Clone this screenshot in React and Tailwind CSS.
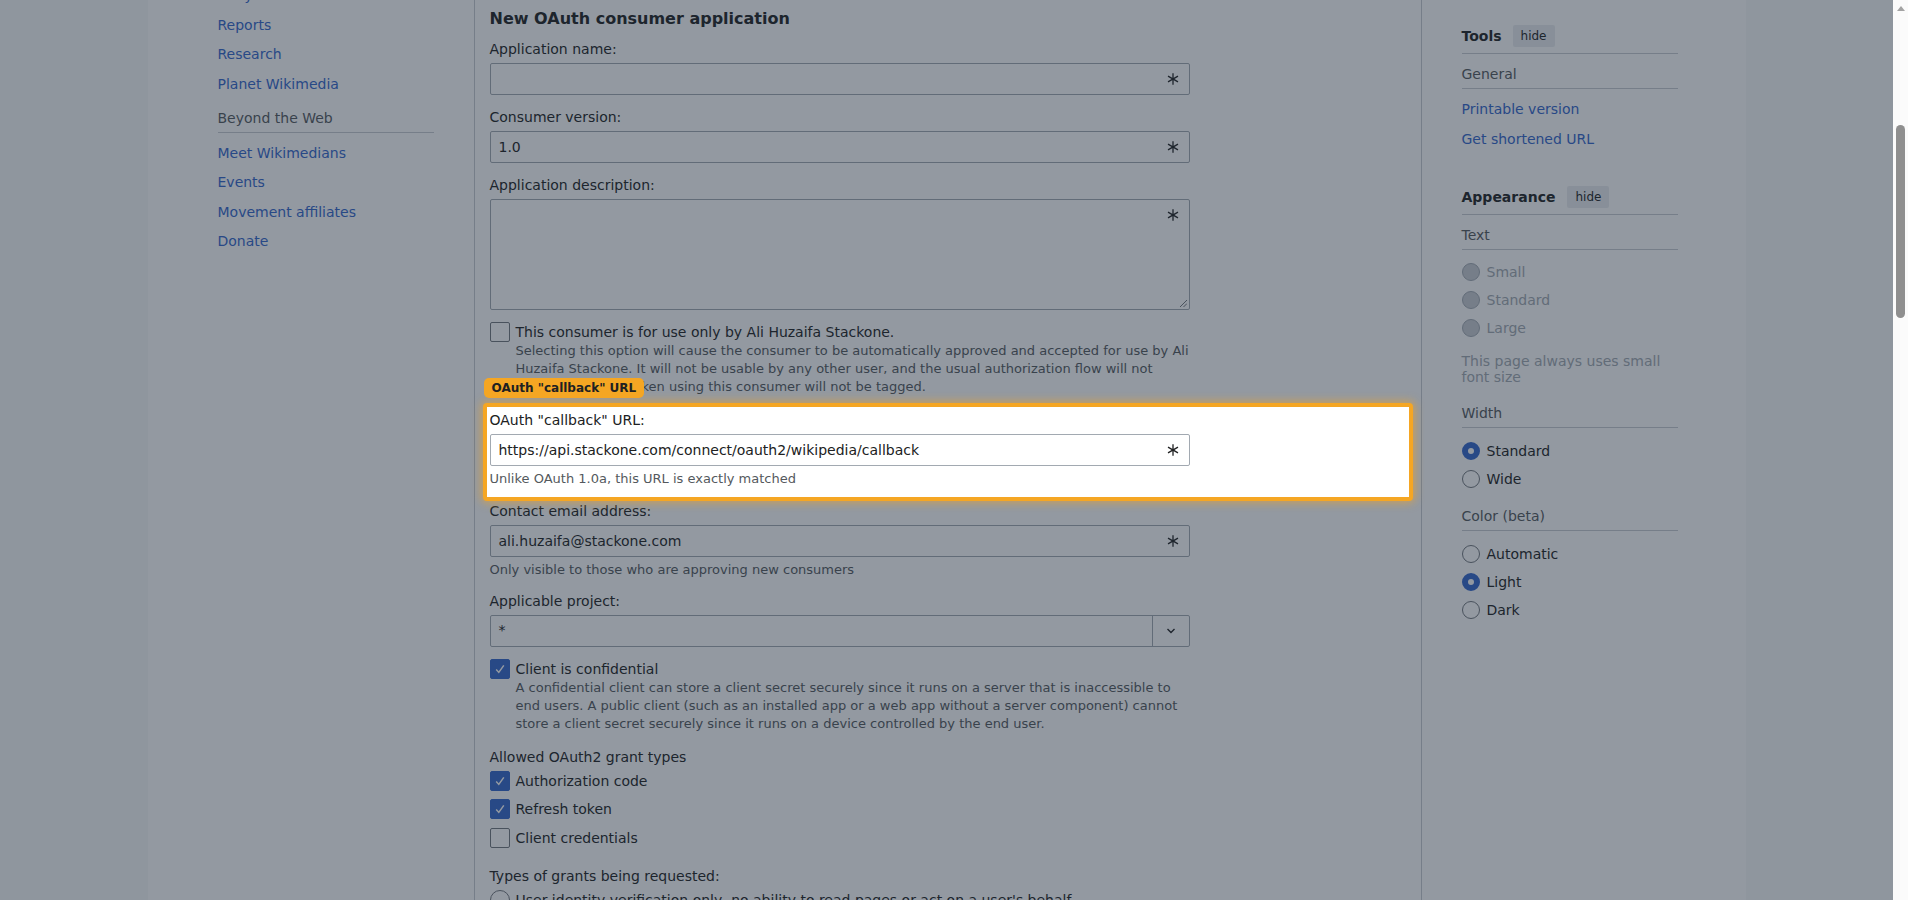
import React from "react";

const Asterisk = () => (
  <svg width="12" height="12" viewBox="0 0 12 12" className="shrink-0">
    <g stroke="#202122" strokeWidth="1.3">
      <line x1="6" y1="0.3" x2="6" y2="11.7" />
      <line x1="1" y1="3.1" x2="11" y2="8.9" />
      <line x1="1" y1="8.9" x2="11" y2="3.1" />
    </g>
    <circle cx="6" cy="6" r="1.3" fill="#202122" />
  </svg>
);

function TextInput({ value }) {
  return (
    <div className="mt-[4px] flex h-[32px] w-[700px] items-center justify-between rounded-[2px] border border-[#a2a9b1] bg-white pl-[8px] pr-[10px] text-[14px] text-[#202122]">
      <span>{value}</span>
      <Asterisk />
    </div>
  );
}

function Label({ children }) {
  return <div className="text-[14px] leading-[20px] text-[#202122]">{children}</div>;
}

function Help({ children, className = "" }) {
  return (
    <div className={`whitespace-nowrap text-[13px] leading-[18px] text-[#54595d] ${className}`}>{children}</div>
  );
}

function Box({ checked }) {
  return checked ? (
    <div className="flex h-[20px] w-[20px] shrink-0 items-center justify-center rounded-[2px] border border-[#36c] bg-[#36c]">
      <svg width="14" height="14" viewBox="0 0 14 14">
        <path d="M3.2 7.6 L5.8 10.4 L10.8 3.4" fill="none" stroke="#fff" strokeWidth="1.5" />
      </svg>
    </div>
  ) : (
    <div className="h-[20px] w-[20px] shrink-0 rounded-[2px] border border-[#72777d] bg-white" />
  );
}

function CheckRow({ checked, label, className = "" }) {
  return (
    <div className={`flex items-center gap-[6px] ${className}`}>
      <Box checked={checked} />
      <span className="text-[14px] leading-[20px] text-[#202122]">{label}</span>
    </div>
  );
}

function SideRadio({ state, label }) {
  const circle =
    state === "on"
      ? "border-[6px] border-[#36c] bg-white"
      : state === "disabled"
      ? "border border-[#a2a9b1] bg-[#c8ccd1]"
      : "border border-[#72777d] bg-white";
  const text = state === "disabled" ? "text-[#a2a9b1]" : "text-[#202122]";
  return (
    <div className="flex h-[28px] items-center gap-[7px]">
      <div className={`h-[18px] w-[18px] shrink-0 rounded-full ${circle}`} />
      <span className={`text-[14px] leading-[20px] ${text}`}>{label}</span>
    </div>
  );
}

function HideBtn() {
  return (
    <div className="flex h-[22px] items-center rounded-[2px] bg-[#eaecf0] px-[8px] text-[12px] text-[#202122]">hide</div>
  );
}

const SideLink = ({ children }) => (
  <div className="flex h-[29.5px] items-center text-[14px] leading-[20px] text-[#36c]">{children}</div>
);

export default function App() {
  return (
    <div className="flex h-[900px] w-[1908px] overflow-hidden">
      <div className="relative h-[900px] flex-1 overflow-hidden bg-[#f8f9fa] font-['DejaVu_Sans',sans-serif]">
        <div className="mx-auto flex h-full w-[1598px] bg-white">
          {/* Left sidebar */}
          <div className="w-[326px] shrink-0 pl-[70px]">
            <div className="mt-[-19.5px] w-[216px]">
              <SideLink>Babylon</SideLink>
              <SideLink>Reports</SideLink>
              <SideLink>Research</SideLink>
              <SideLink>Planet Wikimedia</SideLink>
              <div className="mt-[9.5px] border-b border-[#c8ccd1] pb-[4px] text-[14px] leading-[20px] text-[#54595d]">
                Beyond the Web
              </div>
              <div className="mt-[5px]">
                <SideLink>Meet Wikimedians</SideLink>
                <SideLink>Events</SideLink>
                <SideLink>Movement affiliates</SideLink>
                <SideLink>Donate</SideLink>
              </div>
            </div>
          </div>

          {/* Main content */}
          <div className="w-[948px] shrink-0 border-x border-[#c8ccd1] pl-[15px]">
            <div className="pt-[9px] text-[16px] font-bold leading-[20px] text-[#202122]">
              New OAuth consumer application
            </div>
            <div className="mt-[10px]">
              <Label>Application name:</Label>
              <TextInput value="" />
            </div>
            <div className="mt-[12px]">
              <Label>Consumer version:</Label>
              <TextInput value="1.0" />
            </div>
            <div className="mt-[12px]">
              <Label>Application description:</Label>
              <div className="mt-[4px] flex h-[111px] w-[700px] flex-col items-end justify-between rounded-[2px] border border-[#a2a9b1] bg-white pb-[2px] pr-[2px] pt-[9px]">
                <div className="mr-[8px]">
                  <Asterisk />
                </div>
                <svg width="8" height="8" viewBox="0 0 8 8">
                  <path d="M1 8 L8 1 M4.5 8 L8 4.5" stroke="#72777d" strokeWidth="1" />
                </svg>
              </div>
            </div>
            <div className="mt-[12px]">
              <CheckRow checked={false} label="This consumer is for use only by Ali Huzaifa Stackone." />
              <Help className="pl-[26px]">
                Selecting this option will cause the consumer to be automatically approved and accepted for use by Ali
                <br />
                Huzaifa Stackone. It will not be usable by any other user, and the usual authorization flow will not
                <br />
                function. Actions taken using this consumer will not be tagged.
              </Help>
            </div>

            {/* Highlighted field */}
            <div className="relative z-20 ml-[-7px] mt-[7px] w-[930px] rounded-[4px] border-4 border-[#f5a623] bg-white pb-[9px] pl-[3px] pt-[3px] shadow-[0_0_8px_2px_rgba(245,166,35,0.55)]">
              <div className="absolute left-[-3px] top-[-29px] flex h-[20px] items-center rounded-[5px] bg-[#f5a623] px-[8px] text-[12px] font-bold leading-[20px] text-[#202122]">
                OAuth "callback" URL
              </div>
              <Label>OAuth "callback" URL:</Label>
              <TextInput value="https://api.stackone.com/connect/oauth2/wikipedia/callback" />
              <Help className="mt-[4px]">Unlike OAuth 1.0a, this URL is exactly matched</Help>
            </div>

            <div>
              <Label>Contact email address:</Label>
              <TextInput value="ali.huzaifa@stackone.com" />
              <Help className="mt-[4px]">Only visible to those who are approving new consumers</Help>
            </div>
            <div className="mt-[12px]">
              <Label>Applicable project:</Label>
              <div className="mt-[4px] flex h-[32px] w-[700px] rounded-[2px] border border-[#a2a9b1] bg-white text-[14px] text-[#202122]">
                <div className="flex-1 pl-[8px] pt-[4px] leading-[20px]">*</div>
                <div className="flex w-[37px] items-center justify-center border-l border-[#a2a9b1]">
                  <svg width="10" height="6" viewBox="0 0 10 6">
                    <path d="M1.5 1 L5 4.5 L8.5 1" fill="none" stroke="#202122" strokeWidth="1.4" />
                  </svg>
                </div>
              </div>
            </div>
            <div className="mt-[12px]">
              <CheckRow checked label="Client is confidential" />
              <Help className="pl-[26px]">
                A confidential client can store a client secret securely since it runs on a server that is inaccessible to
                <br />
                end users. A public client (such as an installed app or a web app without a server component) cannot
                <br />
                store a client secret securely since it runs on a device controlled by the end user.
              </Help>
            </div>
            <div className="mt-[14px]">
              <Label>Allowed OAuth2 grant types</Label>
              <CheckRow className="mt-[4px]" checked label="Authorization code" />
              <CheckRow className="mt-[8px]" checked label="Refresh token" />
              <CheckRow className="mt-[9px]" checked={false} label="Client credentials" />
            </div>
            <div className="mt-[18px]">
              <Label>Types of grants being requested:</Label>
              <div className="mt-[4px] flex items-center gap-[6px]">
                <div className="h-[20px] w-[20px] shrink-0 rounded-full border border-[#72777d] bg-white" />
                <span className="text-[14px] leading-[20px] text-[#202122]">
                  User identity verification only, no ability to read pages or act on a user's behalf.
                </span>
              </div>
            </div>
          </div>

          {/* Right sidebar */}
          <div className="flex-1 pl-[40px] pt-[25px]">
            <div className="w-[216px]">
              <div className="flex items-center gap-[11px] border-b border-[#c8ccd1] pb-[6px]">
                <span className="text-[14px] font-bold leading-[22px] text-[#202122]">Tools</span>
                <HideBtn />
              </div>
              <div className="border-b border-[#c8ccd1] pb-[4px] pt-[10px] text-[14px] leading-[20px] text-[#54595d]">General</div>
              <div className="mt-[5px]">
                <div className="flex h-[30px] items-center text-[14px] text-[#36c]">Printable version</div>
                <div className="flex h-[30px] items-center text-[14px] text-[#36c]">Get shortened URL</div>
              </div>
              <div className="mt-[32px] flex items-center gap-[12px] border-b border-[#c8ccd1] pb-[6px]">
                <span className="text-[14px] font-bold leading-[22px] text-[#202122]">Appearance</span>
                <HideBtn />
              </div>
              <div className="border-b border-[#c8ccd1] pb-[4px] pt-[10px] text-[14px] leading-[20px] text-[#54595d]">Text</div>
              <div className="mt-[8px]">
                <SideRadio state="disabled" label="Small" />
                <SideRadio state="disabled" label="Standard" />
                <SideRadio state="disabled" label="Large" />
              </div>
              <div className="mt-[11px] text-[14px] leading-[16px] text-[#a2a9b1]">
                This page always uses small
                <br />
                font size
              </div>
              <div className="mt-[18px] border-b border-[#c8ccd1] pb-[4px] text-[14px] leading-[20px] text-[#54595d]">Width</div>
              <div className="mt-[9px]">
                <SideRadio state="on" label="Standard" />
                <SideRadio state="off" label="Wide" />
              </div>
              <div className="mt-[13px] border-b border-[#c8ccd1] pb-[4px] text-[14px] leading-[20px] text-[#54595d]">Color (beta)</div>
              <div className="mt-[9px]">
                <SideRadio state="off" label="Automatic" />
                <SideRadio state="on" label="Light" />
                <SideRadio state="off" label="Dark" />
              </div>
            </div>
          </div>
        </div>

        {/* Dimming overlay */}
        <div className="absolute inset-0 z-10 bg-[rgba(30,41,59,0.48)]" />
      </div>

      {/* Scrollbar */}
      <div className="flex h-[900px] w-[15px] shrink-0 flex-col items-center bg-[#fbfbfb]">
        <svg className="mt-[6px]" width="8" height="5" viewBox="0 0 8 5">
          <path d="M0 5 L4 0 L8 5 Z" fill="#a3a3a3" />
        </svg>
        <div className="mt-[114px] h-[193px] w-[9px] rounded-full bg-[#8f8f8f]" />
      </div>
    </div>
  );
}
